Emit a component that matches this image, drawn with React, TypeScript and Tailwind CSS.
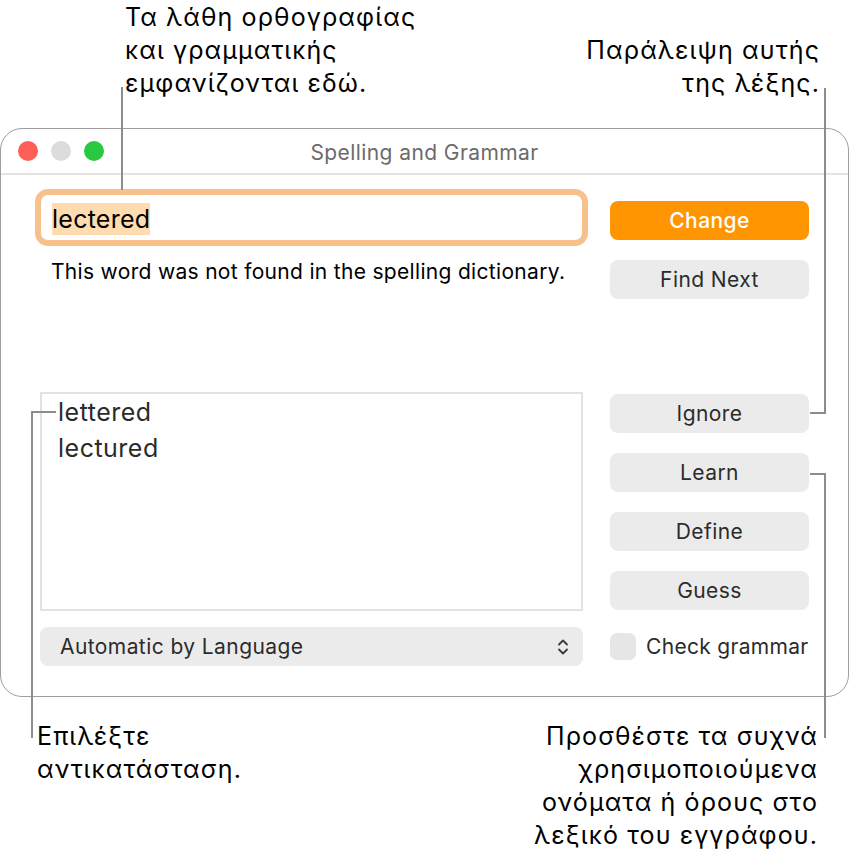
const ui = { fontFamily: 'Inter, "Noto Sans", sans-serif' };

function Btn({ label, primary }: { label: string; primary?: boolean }) {
  return (
    <div
      className={`flex h-[39px] items-center justify-center rounded-[8px] text-[21px] tracking-[0.02em] ${
        primary ? 'bg-[#ff9500] font-medium text-white' : 'bg-[#ebebeb] text-[#2b2b2b]'
      }`}
    >
      {label}
    </div>
  );
}

function Line({ className }: { className: string }) {
  return <div className={`absolute bg-[#8c8c8c] ${className}`} />;
}

export default function App() {
  return (
    <div
      className="relative h-[867px] w-[851px] overflow-hidden bg-white text-black"
      style={ui}
    >
      {/* callouts above the window */}
      <div className="flex h-[128px] justify-between text-[25px] leading-[33px] tracking-[0.044em]">
        <div className="pl-[125px] pt-[1px]">
          Τα λάθη ορθογραφίας
          <br />
          και γραμματικής
          <br />
          εμφανίζονται εδώ.
        </div>
        <div className="pr-[31px] pt-[34px] text-right">
          Παράλειψη αυτής
          <br />
          της λέξης.
        </div>
      </div>

      {/* window */}
      <div className="flex h-[569px] w-[849px] flex-col rounded-[22px] border-[1.5px] border-[#9d9d9d] bg-white">
        <div className="relative flex h-[46px] items-center border-b-2 border-[#e4e4e4] px-[17px]">
          <div className="flex gap-[13px]">
            <span className="h-[20px] w-[20px] rounded-full bg-[#fe5f57]" />
            <span className="h-[20px] w-[20px] rounded-full bg-[#dcdcdc]" />
            <span className="h-[20px] w-[20px] rounded-full bg-[#28c840]" />
          </div>
          <div className="absolute inset-0 flex items-center justify-center pt-[3px] text-[21px] tracking-[0.02em] text-[#6b6b6b]">
            Spelling and Grammar
          </div>
        </div>

        <div className="flex gap-[22px] pl-[34px] pt-[14px]">
          {/* left column */}
          <div className="flex w-[553px] shrink-0 flex-col">
            <div className="flex h-[57px] items-center rounded-[13px] border-[6px] border-[#f8c18c] bg-white pl-[11px] pt-[2px]">
              <span className="bg-[#fedcaf] text-[25px] leading-[32px] tracking-[0.01em]">lectered</span>
            </div>
            <div className="mt-[15px] pl-[16px] text-[21px] leading-[22px] tracking-[0.015em]">
              This word was not found in the spelling dictionary.
            </div>
            <div className="mx-[5px] mt-[109px] h-[219px] border-2 border-[#e2e2e2] pl-[16px] text-[25px] leading-[36px] tracking-[0.02em] text-[#2b2b2b]">
              <div>lettered</div>
              <div>lectured</div>
            </div>
            <div className="mx-[5px] mt-[16px] flex h-[39px] items-center justify-between rounded-[8px] bg-[#ebebeb] pl-[20px] pr-[14px] text-[21px] tracking-[0.02em] text-[#2b2b2b]">
              <span>Automatic by Language</span>
              <svg width="12" height="18" viewBox="0 0 12 18" fill="none" stroke="#3a3a3a" strokeWidth="1.8" strokeLinecap="round" strokeLinejoin="round">
                <path d="M2 6.5 6 2.5l4 4" />
                <path d="M2 11.5l4 4 4-4" />
              </svg>
            </div>
          </div>

          {/* right column */}
          <div className="flex w-[199px] shrink-0 flex-col pt-[12px]">
            <Btn label="Change" primary />
            <div className="mt-[20px]">
              <Btn label="Find Next" />
            </div>
            <div className="mt-[95px] flex flex-col gap-[20px]">
              <Btn label="Ignore" />
              <Btn label="Learn" />
              <Btn label="Define" />
              <Btn label="Guess" />
            </div>
            <div className="mt-[21px] flex items-center gap-[10px] whitespace-nowrap text-[21px] tracking-[0.015em] text-[#2b2b2b]">
              <span className="h-[27px] w-[26px] shrink-0 rounded-[7px] bg-[#e6e6e6]" />
              <span>Check grammar</span>
            </div>
          </div>
        </div>
      </div>

      {/* callouts below the window */}
      <div className="flex justify-between pt-[23px] text-[25px] leading-[33px] tracking-[0.044em]">
        <div className="pl-[37px]">
          Επιλέξτε
          <br />
          αντικατάσταση.
        </div>
        <div className="pr-[33px] text-right">
          Προσθέστε τα συχνά
          <br />
          χρησιμοποιούμενα
          <br />
          ονόματα ή όρους στο
          <br />
          λεξικό του εγγράφου.
        </div>
      </div>

      {/* leader lines */}
      <Line className="left-[121px] top-[87px] h-[103px] w-[2px]" />
      <Line className="left-[824px] top-[88px] h-[326px] w-[2px]" />
      <Line className="left-[810px] top-[412px] h-[2px] w-[16px]" />
      <Line className="left-[810px] top-[473px] h-[2px] w-[16px]" />
      <Line className="left-[824px] top-[473px] h-[265px] w-[2px]" />
      <Line className="left-[31px] top-[411px] h-[2px] w-[25px]" />
      <Line className="left-[31px] top-[411px] h-[327px] w-[2px]" />
    </div>
  );
}
